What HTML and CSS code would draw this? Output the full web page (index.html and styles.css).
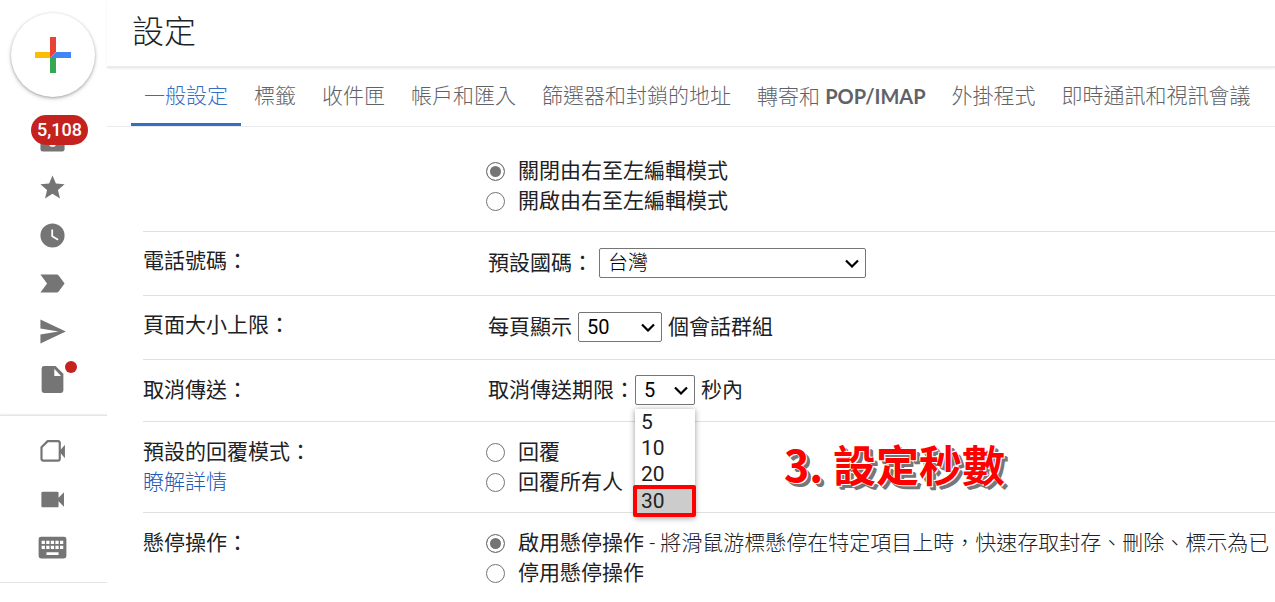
FILE: index.html
```html
<!DOCTYPE html>
<html lang="zh-Hant">
<head>
<meta charset="utf-8">
<meta name="viewport" content="width=device-width, initial-scale=1">
<title>設定</title>
<link rel="stylesheet" href="styles.css">
</head>
<body>
<div class="app">
  <aside class="sidebar">
    <button class="compose" type="button" aria-label="撰寫">
      <svg class="compose-icon" viewBox="0 0 36 36" aria-hidden="true">
        <path fill="#ea4335" d="M15 0h6v15l-6 6z"/>
        <path fill="#fbbc04" d="M0 15h15v6H0z"/>
        <path fill="#34a853" d="M15 21h6v15h-6z"/>
        <path fill="#4285f4" d="M21 15h15v6H15z"/>
      </svg>
    </button>
    <nav class="nav" aria-label="郵件">
      <a class="nav-item" href="#" aria-label="收件匣">
        <svg class="icon" viewBox="0 0 24 24" aria-hidden="true"><path d="M20 3H4a2 2 0 0 0-2 2v15a2 2 0 0 0 2 2h16a2 2 0 0 0 2-2V5a2 2 0 0 0-2-2zm0 12h-5a3 3 0 0 1-6 0H4V5h16z"/></svg>
        <span class="count">5,108</span>
      </a>
      <a class="nav-item" href="#" aria-label="已加星號">
        <svg class="icon" viewBox="0 0 24 24" aria-hidden="true"><path d="M12 17.27 18.18 21l-1.64-7.03L22 9.24l-7.19-.61L12 2 9.19 8.63 2 9.24l5.46 4.73L5.82 21z"/></svg>
      </a>
      <a class="nav-item" href="#" aria-label="已延後">
        <svg class="icon" viewBox="0 0 24 24" aria-hidden="true"><path d="M12 2a10 10 0 1 0 0 20 10 10 0 0 0 0-20zm4.2 14.2L11 13V7h1.5v5.2l4.5 2.7z"/></svg>
      </a>
      <a class="nav-item" href="#" aria-label="重要郵件">
        <svg class="icon" viewBox="0 0 24 24" aria-hidden="true"><path d="M2 4.500h13.500q1 0 1.600.8L22 12l-4.900 6.700q-.6.8-1.600.8H2L7.500 12z"/></svg>
      </a>
      <a class="nav-item" href="#" aria-label="寄件備份">
        <svg class="icon" viewBox="0 0 24 24" aria-hidden="true"><path d="M2 22 23 12 2 2v7.500L17 12 2 14.500z"/></svg>
      </a>
      <a class="nav-item" href="#" aria-label="草稿">
        <svg class="icon" viewBox="0 0 24 24" aria-hidden="true"><path d="M5 .8h9.500L21 7.300v13.900a2 2 0 0 1-2 2H5a2 2 0 0 1-2-2V2.800a2 2 0 0 1 2-2zM13.500 3v6H19z"/></svg>
        <span class="dot"></span>
      </a>
    </nav>
    <nav class="nav nav--meet" aria-label="會議">
      <a class="nav-item" href="#" aria-label="發起會議">
        <svg class="icon" viewBox="0 0 24 24" aria-hidden="true"><path fill="none" stroke="#757575" stroke-width="1.800" stroke-linejoin="round" d="M8 3.400h8.500q1.500 0 1.500 1.500v13.200q0 1.500-1.500 1.500H4.400Q2.900 19.600 2.900 18.100V8.500z"/><path d="m17.500 12 4.800-5.500v11z"/></svg>
      </a>
      <a class="nav-item" href="#" aria-label="加入會議">
        <svg class="icon" viewBox="0 0 24 24" aria-hidden="true"><path d="M17 10.500V6.500a1 1 0 0 0-1-1H4a1.200 1.200 0 0 0-1.200 1v11a1.200 1.200 0 0 0 1.200 1h12a1 1 0 0 0 1-1v-4l4.500 4.500V6z"/></svg>
      </a>
      <a class="nav-item" href="#" aria-label="鍵盤">
        <svg class="icon" viewBox="0 0 24 24" aria-hidden="true"><rect x=".5" y="3" width="23" height="18" rx="2"/><path fill="#fff" d="M3 6.500h2.700v2.700H3zm3.800 0h2.700v2.700H6.800zm3.800 0h2.700v2.700h-2.700zm3.800 0h2.700v2.700h-2.700zm3.800 0h2.700v2.700h-2.700zM3 10.500h2.700v2.700H3zm3.800 0h2.700v2.700H6.800zm3.800 0h2.700v2.700h-2.700zm3.800 0h2.700v2.700h-2.700zm3.800 0h2.700v2.700h-2.700zM7 16h10v2.300H7z"/></svg>
      </a>
    </nav>
  </aside>

  <main class="main">
    <header class="header"><h1 class="title">設定</h1></header>
    <nav class="tabs" aria-label="設定">
      <a class="tab tab--active" href="#">一般設定</a>
      <a class="tab" href="#">標籤</a>
      <a class="tab" href="#">收件匣</a>
      <a class="tab" href="#">帳戶和匯入</a>
      <a class="tab" href="#">篩選器和封鎖的地址</a>
      <a class="tab" href="#">轉寄和 <span class="latin">POP/IMAP</span></a>
      <a class="tab" href="#">外掛程式</a>
      <a class="tab" href="#">即時通訊和視訊會議</a>
    </nav>

    <form class="settings">
      <section class="row row--first">
        <div class="name"></div>
        <div class="value">
          <label class="choice"><input class="radio" type="radio" name="rtl" checked><span>關閉由右至左編輯模式</span></label>
          <label class="choice"><input class="radio" type="radio" name="rtl"><span>開啟由右至左編輯模式</span></label>
        </div>
      </section>

      <section class="row row--field">
        <div class="name">電話號碼：</div>
        <div class="value field">
          <label for="country">預設國碼：</label>
          <select class="select select--country" id="country"><option>台灣</option></select>
        </div>
      </section>

      <section class="row row--field">
        <div class="name">頁面大小上限：</div>
        <div class="value field">
          <label for="size">每頁顯示</label>
          <select class="select select--size" id="size"><option>50</option></select>
          <span>個會話群組</span>
        </div>
      </section>

      <section class="row row--undo">
        <div class="name">取消傳送：</div>
        <div class="value field">
          <div class="pair">
            <label for="undo">取消傳送期限：</label>
            <div class="dropdown">
              <select class="select select--undo" id="undo"><option>5</option><option>10</option><option>20</option><option>30</option></select>
              <ul class="menu" role="listbox" aria-label="取消傳送期限">
                <li class="option" role="option">5</li>
                <li class="option" role="option">10</li>
                <li class="option" role="option">20</li>
                <li class="option option--marked" role="option" aria-selected="true">30</li>
              </ul>
            </div>
          </div>
          <span>秒內</span>
        </div>
      </section>

      <section class="row">
        <div class="name">預設的回覆模式：<a class="more" href="#">瞭解詳情</a></div>
        <div class="value">
          <label class="choice"><input class="radio" type="radio" name="reply"><span>回覆</span></label>
          <label class="choice"><input class="radio" type="radio" name="reply"><span>回覆所有人</span></label>
        </div>
        <p class="callout">3. 設定秒數</p>
      </section>

      <section class="row">
        <div class="name">懸停操作：</div>
        <div class="value">
          <label class="choice"><input class="radio" type="radio" name="hover" checked><span>啟用懸停操作 <span class="note">- 將滑鼠游標懸停在特定項目上時，快速存取封存、刪除、標示為已</span></span></label>
          <label class="choice"><input class="radio" type="radio" name="hover"><span>停用懸停操作</span></label>
        </div>
      </section>
    </form>
  </main>
</div>
</body>
</html>
```
FILE: styles.css
```css
* { box-sizing: border-box; }

body {
  margin: 0;
  overflow: hidden;
  background: #fff;
  color: #202124;
  font: 400 21px/30px Roboto, "Noto Sans CJK TC", sans-serif;
}

a { color: inherit; text-decoration: none; }

.app { display: flex; min-height: 100vh; }

/* Sidebar */
.sidebar { flex: none; width: 107px; padding-top: 13px; }

.compose {
  display: grid;
  place-items: center;
  width: 84px;
  height: 84px;
  margin: 0 0 18px 11px;
  padding: 0;
  border: 0;
  border-radius: 50%;
  background: #fff;
  box-shadow: 0 1px 3px rgba(60, 64, 67, .4), 0 2px 5px rgba(60, 64, 67, .15);
}
.compose-icon { width: 36px; height: 36px; }

.nav { padding-bottom: 12px; border-bottom: 1px solid #e4e4e4; }
.nav:not(.nav--meet) { box-shadow: 0 -2px 2px -1px #eee inset; }
.nav--meet { padding: 11px 0; }
.nav-item {
  position: relative;
  display: grid;
  place-items: center;
  height: 48px;
  padding-right: 2px;
}
.icon { width: 29px; height: 29px; fill: #757575; }

.count {
  position: absolute;
  top: 0;
  left: 31px;
  height: 30px;
  padding: 0 6px;
  border-radius: 15px;
  background: #c5221f;
  color: #fff;
  font-size: 18px;
  font-weight: 500;
}
.dot {
  position: absolute;
  top: 6px;
  left: 65px;
  width: 12px;
  height: 12px;
  border-radius: 50%;
  background: #c5221f;
}

/* Header and tabs */
.main { flex: 1; min-width: 0; }
.header {
  padding: 8px 25px 10px;
  border-bottom: 2px solid #ebebeb;
  box-shadow: 0 1px 2px #eee;
}
.title {
  margin: 0;
  font-size: 32px;
  font-weight: 300;
  line-height: 48px;
}
.tabs {
  display: flex;
  padding-left: 24px;
  border-bottom: 1px solid #e8eaed;
  color: #5f6368;
  font-weight: 300;
}
.tab {
  flex: none;
  padding: 13px 13px 11px;
  border-bottom: 3px solid transparent;
  white-space: nowrap;
}
.tab--active { border-color: #3370c4; color: #3370c4; }
.latin { font-family: Lato, sans-serif; font-size: 20px; font-weight: 700; }

/* Settings */
.settings { padding-left: 36px; }
.row {
  position: relative;
  display: flex;
  padding: 15px 0;
  border-bottom: 1px solid #e0e0e0;
}
.row:last-child { border-bottom: 0; }
.row--first { padding-top: 29px; }
.row--field { padding: 16px 0 17px; }
.row--undo { padding-bottom: 16px; }
.name { flex: none; width: 343px; }
.row--field .name { line-height: 26px; }
.value { flex: 1; min-width: 0; }
.field { display: flex; gap: 6px; padding-left: 2px; }
.pair { display: flex; }
.more { display: block; color: #1f5bb5; font-weight: 300; }

.choice {
  display: flex;
  align-items: center;
  gap: 13px;
  height: 30px;
  white-space: nowrap;
}
.note { font-weight: 300; }
.radio {
  appearance: none;
  flex: none;
  width: 19px;
  height: 19px;
  margin: 0;
  border: 1px solid #757575;
  border-radius: 50%;
  background: #fff;
}
.radio:checked { background: #757575; box-shadow: inset 0 0 0 3px #fff; }

.select {
  appearance: none;
  height: 30px;
  padding: 0 8px;
  border: 1px solid #767676;
  border-radius: 2px;
  color: #000;
  font: 400 20px/28px Roboto, "Noto Sans CJK TC", sans-serif;
  background: #fff url("data:image/svg+xml,%3Csvg xmlns='http://www.w3.org/2000/svg' width='14' height='9' viewBox='0 0 14 9'%3E%3Cpath d='M1 1.500l6 6 6-6' fill='none' stroke='%23000' stroke-width='2.200'/%3E%3C/svg%3E") no-repeat right 6px center;
}
.select--country { width: 267px; font-weight: 300; }
.select--size { width: 84px; }
.select--undo { display: block; width: 60px; }

.dropdown { position: relative; }
.menu {
  position: absolute;
  z-index: 2;
  top: 34px;
  left: 0;
  width: 60px;
  margin: 0;
  padding: 0;
  list-style: none;
  background: #fff;
  box-shadow: 0 1px 6px rgba(0, 0, 0, .4);
}
.option { padding: 0 6px; line-height: 26px; }
.option--marked {
  margin: -2px -1px 0 -2px;
  padding: 0 4px;
  border: 4px solid #f00;
  border-radius: 2px;
  background: #ccc;
  line-height: 24px;
}

.callout {
  position: absolute;
  top: 11px;
  left: 641px;
  margin: 0;
  color: #f00;
  font: 700 43px/60px "Noto Sans CJK TC", sans-serif;
  white-space: nowrap;
  text-shadow: 1px 1px 0 #fff, -1px -1px 0 #fff, 3px 3px 0 #777, 4px 4px 0 #777;
}
```
